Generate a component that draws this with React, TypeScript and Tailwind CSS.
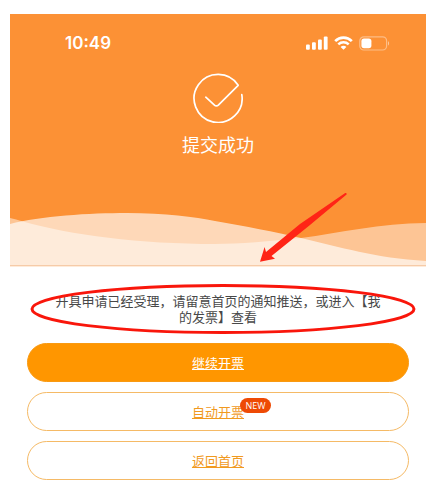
import React from "react";

const SignalIcon = () => (
  <svg className="w-[22px] h-[14px]" viewBox="0 0 22 14" fill="#fff">
    <rect x="0" y="8.5" width="3.8" height="5.3" rx="1" />
    <rect x="6" y="6.3" width="3.8" height="7.5" rx="1" />
    <rect x="12" y="3.5" width="3.8" height="10.3" rx="1" />
    <rect x="17.8" y="0.4" width="3.8" height="13.4" rx="1" />
  </svg>
);

const WifiIcon = () => (
  <svg className="w-[19px] h-[14px]" viewBox="0 0 19 14" fill="none">
    <path d="M1.2 5.1C5.8.5 13.2.5 17.8 5.1" stroke="#fff" strokeWidth="2.7" />
    <path d="M4.3 8.3C7.2 5.5 11.8 5.5 14.7 8.3" stroke="#fff" strokeWidth="2.5" />
    <path d="M9.5 13.8 6.6 10.9C8.2 9.4 10.8 9.4 12.4 10.9Z" fill="#fff" />
  </svg>
);

const BatteryIcon = () => (
  <svg className="w-[31px] h-[15px]" viewBox="0 0 31 15" fill="none">
    <rect x="0.8" y="0.8" width="26.8" height="13.2" rx="4" stroke="#fff" strokeOpacity="0.4" strokeWidth="1.2" />
    <path d="M29 5.3C30.4 5.8 30.4 9 29 9.5Z" fill="#fff" fillOpacity="0.5" />
    <rect x="2.4" y="2.6" width="10" height="9.6" rx="2.6" fill="#fff" />
  </svg>
);

const SuccessIcon = () => (
  <svg
    className="w-[50px] h-[50px]"
    viewBox="0 0 50 50"
    fill="none"
    stroke="#fff"
    strokeWidth="1.7"
    strokeLinecap="round"
    strokeLinejoin="round"
  >
    <path d="M48.8 21.6A24 24 0 1 1 45.2 12.3L25.6 31.8Q23.4 34 21.2 31.8L12.8 24.2" />
  </svg>
);

const Waves = () => (
  <svg
    className="block w-full h-[55px]"
    viewBox="0 0 416 55"
    preserveAspectRatio="none"
  >
    <path
      d="M0 6C4 7 8 8 13 9.5C60 23 130 32 205 32C230 32 260 29 291 26C330 21 370 11 416 11V55H0Z"
      fill="#fff"
      fillOpacity="0.48"
    />
    <path
      d="M0 12C30 4 80 1 117 1C155 1 185 5 205 9C235 14 265 20 291 26C330 35 365 46 416 49V55H0Z"
      fill="#fff"
      fillOpacity="0.65"
    />
    <rect x="0" y="53" width="416" height="1" fill="#f6cba8" />
  </svg>
);

const StatusBar = () => (
  <div className="flex items-center justify-between pt-[20px] pl-[55px] pr-[36px]">
    <span className="font-['Inter','Liberation_Sans',sans-serif] text-[17px] leading-[18px] font-semibold">
      10:49
    </span>
    <div className="flex items-center gap-[6px]">
      <SignalIcon />
      <WifiIcon />
      <BatteryIcon />
    </div>
  </div>
);

interface IAction {
  label: string;
  filled?: boolean;
  badge?: string;
}

const ActionButton = ({ label, filled, badge }: IAction) => (
  <button
    type="button"
    className={`h-[39px] w-full rounded-full border text-[13px] leading-[20px] ${
      filled
        ? "border-[#f99a12] bg-[#ff9600] text-white"
        : "border-[#f5ba66] bg-white text-[#f19a1f]"
    }`}
  >
    <span className="relative inline-block">
      <span className="underline underline-offset-1">{label}</span>
      {badge && (
        <span className="absolute left-full -top-1 -ml-1 h-[15px] w-[31px] rounded-full bg-[#ee4a05] text-center font-['Open_Sans',sans-serif] text-[9px] leading-[15px] text-white">
          {badge}
        </span>
      )}
    </span>
  </button>
);

const actions: IAction[] = [
  { label: "继续开票", filled: true },
  { label: "自动开票", badge: "NEW" },
  { label: "返回首页" },
];

export default function App() {
  return (
    <main className="bg-white pt-[14px] pr-1 pb-3 pl-[10px] font-['Noto_Sans_CJK_SC',sans-serif]">
      <header className="relative bg-[#fc9135] text-white">
        <StatusBar />
        <div className="flex flex-col items-center pt-[21px] pb-[55px]">
          <SuccessIcon />
          <h1 className="mt-2 text-[18px] leading-[26px]">提交成功</h1>
        </div>
        <Waves />
        <svg
          className="absolute right-[78px] bottom-1 z-10 w-[90px] h-[72px]"
          viewBox="0 0 90 72"
          fill="#ff2416"
        >
          <path d="M87.2 2Q89.2 1.6 88.6 3.6L52 34L13.5 65L17 67.8L2 70.8L6.6 56L8 61L42 33Z" />
        </svg>
      </header>

      <section className="relative mt-[17px] h-[50px] px-[38px] pt-[9px]">
        <p className="text-center text-[13px] leading-[16px] text-[#484848]">
          开具申请已经受理，请留意首页的通知推送，或进入【我
          <br />
          的发票】查看
        </p>
        <svg
          className="absolute top-0 left-0 h-full w-full px-5 pr-[10px]"
          viewBox="0 0 386 50"
          preserveAspectRatio="none"
          fill="none"
        >
          <ellipse cx="193" cy="25" rx="191" ry="23.5" stroke="#f9160b" strokeWidth="3" />
        </svg>
      </section>

      <div className="mt-[9px] flex flex-col gap-[10px] pr-[17px] pl-[17px]">
        {actions.map((action) => (
          <ActionButton key={action.label} {...action} />
        ))}
      </div>
    </main>
  );
}
